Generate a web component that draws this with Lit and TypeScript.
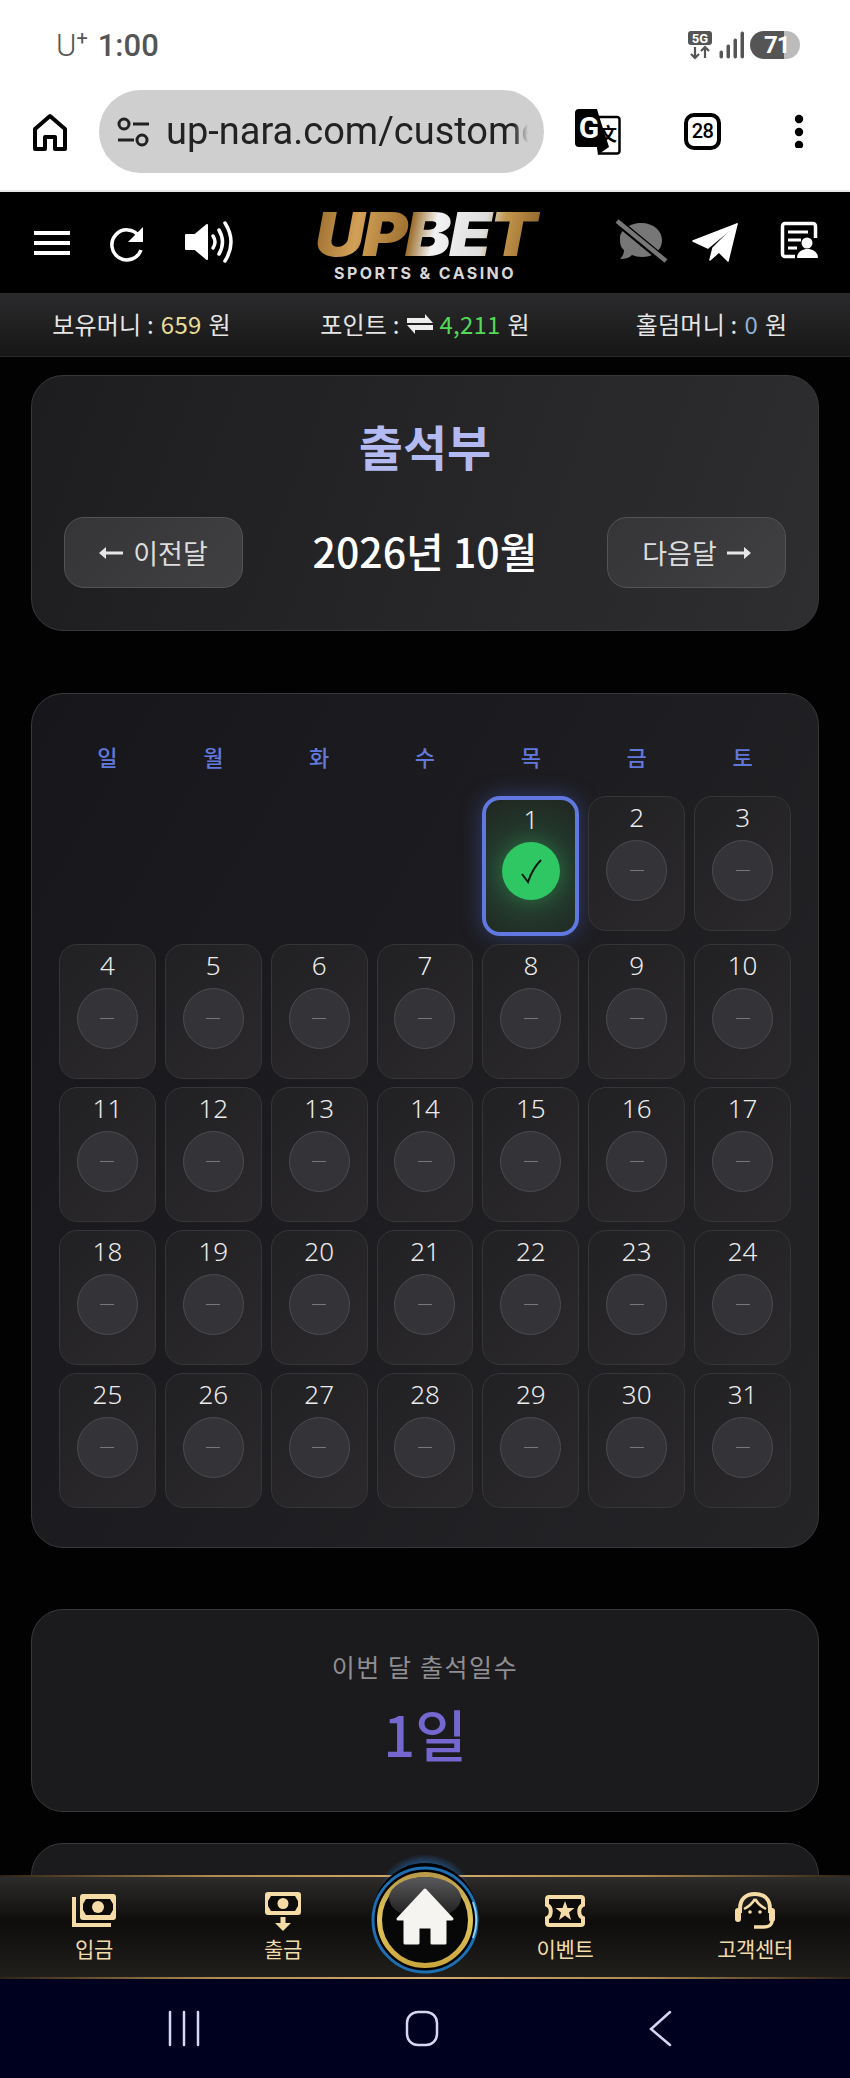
import { LitElement, html, css, svg } from "lit";
import { customElement } from "lit/decorators.js";

@customElement("app-root")
export class AppRoot extends LitElement {
  static styles = css`
    :host { display: block; width: 850px; height: 2078px; font-family: "Noto Sans CJK KR", "Noto Sans", sans-serif; background: #000; overflow: hidden; }
    * { box-sizing: border-box; }
    .page { height: 2078px; display: flex; flex-direction: column; }
    svg { display: block; }

    .status { height: 85px; background: #fff; display: flex; align-items: center; justify-content: space-between; padding: 5px 50px 0 56px; color: #555; flex: none; }
    .clock { display: flex; align-items: baseline; gap: 10px; font-family: Roboto, sans-serif; font-size: 31px; line-height: 1; }
    .uplus { font-weight: 300; }
    .uplus sup { font-size: 20px; line-height: 0; vertical-align: 11px; font-weight: 400; }
    .time { font-weight: 500; }
    .sysicons { display: flex; align-items: center; gap: 6px; }
    .batt { width: 50px; height: 28px; border-radius: 14px; background: linear-gradient(90deg, #555 0 68%, #bbb 68%); color: #fff; font: 700 24px/28px Roboto, sans-serif; text-align: left; padding-left: 14px; letter-spacing: -1px; }

    .toolbar { height: 107px; background: #fff; border-bottom: 2px solid #e9e9e9; display: flex; align-items: flex-start; padding-top: 5px; flex: none; }
    .tb-home { margin: 23px 0 0 33px; }
    .pill { margin: 0 0 0 32px; width: 445px; height: 83px; border-radius: 42px; background: #cfcfcf; display: flex; align-items: center; padding: 0 16px 0 17px; gap: 16px; }
    .pill svg { flex: none; }
    .url { font-family: Roboto, sans-serif; font-size: 38px; color: #222; white-space: nowrap; overflow: hidden; width: 362px; line-height: 83px; -webkit-mask-image: linear-gradient(90deg, #000 96%, transparent); mask-image: linear-gradient(90deg, #000 96%, transparent); }
    .tb-tr { margin: 19px 0 0 31px; }
    .tb-tab { margin: 23px 0 0 63px; width: 37px; height: 37px; border: 4px solid #000; border-radius: 10px; font: 500 20px/29px Roboto, sans-serif; color: #000; text-align: center; letter-spacing: -0.5px; }
    .tb-dots { margin: 24px 0 0 73px; }

    .header { height: 101px; background: #000; flex: none; position: relative; }
    .hicons { position: absolute; left: 0; top: 0; }
    .logo { position: absolute; left: 300px; top: 15px; width: 250px; display: flex; flex-direction: column; align-items: center; }
    .logo-main { font: italic 900 60px/54px Inter, "Liberation Sans", sans-serif; letter-spacing: -2px; transform: scaleX(1.15); background: linear-gradient(100deg, #8f6226 0%, #d2a057 22%, #9c6f2e 44%, #f2f2f2 54%, #dedede 74%, #c3954c 82%, #8a5f24 100%); -webkit-background-clip: text; background-clip: text; color: transparent; white-space: nowrap; padding: 0 6px; }
    .logo-sub { font: 700 16px/20px Inter, "Liberation Sans", sans-serif; letter-spacing: 2.4px; color: #d8d8d8; margin-top: 2px; white-space: nowrap; }

    .balance { height: 64px; flex: none; background: linear-gradient(180deg, #2b2b2d, #161616); border-bottom: 1px solid #2a2a2a; display: grid; grid-template-columns: 283px 284px 283px; align-items: center; color: #e6e6e6; font-size: 24px; letter-spacing: 0.2px; text-align: center; white-space: nowrap; padding-bottom: 2px; }
    .balance .a { color: #e8dc96; } .balance .b { color: #52d957; } .balance .c { color: #8fb0d8; }
    .bal { display: flex; align-items: center; justify-content: center; gap: 7px; }
    .bal.r { padding-left: 6px; }

    .main { flex: 1; min-height: 0; overflow: hidden; padding: 18px 31px 0; display: flex; flex-direction: column; background: #020203; }
    .card { flex: none; border-radius: 32px; border: 1px solid #38373a; }
    .top { height: 256px; background: linear-gradient(110deg, #1d1d20, #2e2d30); padding: 37px 32px 0; display: flex; flex-direction: column; align-items: center; }
    .title { font-size: 48px; line-height: 64px; font-weight: 700; color: #b3baf2; }
    .monthrow { align-self: stretch; margin-top: 40px; display: flex; align-items: center; justify-content: space-between; }
    .mbtn { width: 179px; height: 71px; border-radius: 20px; border: 1px solid #535256; background: linear-gradient(135deg, #353437, #403f42); color: #dcdcdc; font-size: 27px; display: flex; align-items: center; justify-content: center; gap: 10px; }
    .month { font-size: 41px; font-weight: 500; color: #fff; line-height: 60px; padding-bottom: 5px; }

    .cal { margin-top: 62px; height: 855px; background: linear-gradient(120deg, #17161a, #242326); padding: 47px 27px 0; }
    .dow { display: grid; grid-template-columns: repeat(7, 1fr); gap: 9px; color: #6279dc; font-size: 22px; font-weight: 500; text-align: center; line-height: 30px; }
    .grid { margin-top: 25px; display: grid; grid-template-columns: repeat(7, 1fr); gap: 8px 9px; align-items: start; }
    .cell { height: 135px; border-radius: 18px; border: 1px solid #363538; background: linear-gradient(135deg, #212023, #2b292c); display: flex; flex-direction: column; align-items: center; color: #ececec; font-family: "Noto Sans", sans-serif; font-weight: 300; font-size: 26px; line-height: 30px; padding-top: 5px; }
    .ghost { visibility: hidden; }
    .dot { margin-top: 8px; width: 61px; height: 61px; border-radius: 50%; border: 1px solid #4c4b4f; background: #343337; display: flex; align-items: center; justify-content: center; }
    .dash { width: 14px; height: 1px; background: #77767a; }
    .cell.on { height: 140px; border: 4px solid #6078e0; background: radial-gradient(circle at 50% 55%, #2c5a3c 0%, #22342a 60%, #20261f 100%); box-shadow: 0 0 22px rgba(80,110,230,.4); padding-top: 4px; }
    .cell.on .dot { margin-top: 8px; width: 58px; height: 58px; border: none; background: #2fc764; box-shadow: 0 0 16px rgba(47,199,100,.25); }

    .stat { margin-top: 61px; height: 203px; background: #1b1a1d; padding-top: 36px; display: flex; flex-direction: column; align-items: center; }
    .stat .lbl { font-size: 25px; line-height: 40px; color: #8f8e92; letter-spacing: 1.6px; }
    .stat .val { font-size: 56px; font-weight: 500; line-height: 84px; margin-top: 5px; color: #7468d0; }
    .next { margin-top: 31px; height: 200px; background: #1b1a1d; }

    .nav { height: 104px; flex: none; position: relative; background: linear-gradient(180deg, #2d2c2b 0%, #0e0d0c 45%, #211f1c 100%); border-top: 2px solid; border-bottom: 2px solid; border-image: linear-gradient(90deg, #2d2316, #b08a50 25%, #d6ad6b 50%, #b08a50 75%, #2d2316) 1; }
    .items { position: relative; height: 100%; }
    .item { position: absolute; top: 0; bottom: 0; width: 140px; margin-left: -70px; display: flex; flex-direction: column; align-items: center; color: #f2dcaa; font-size: 21px; letter-spacing: -0.4px; }
    .item .tx { line-height: 30px; margin-top: 2px; white-space: nowrap; }
    .homebtn { position: absolute; left: 355px; top: -27px; }

    .sysnav { height: 99px; flex: none; background: #00001f; position: relative; }
    .sysnav svg { position: absolute; left: 0; top: 0; }
  `;

  private icons() {
    return html`
      <svg class="hicons" width="850" height="101" viewBox="0 0 850 101">
        <g fill="#fff">
          <rect x="34" y="39" width="36" height="4"/><rect x="34" y="49" width="36" height="4"/><rect x="34" y="59" width="36" height="4"/>
        </g>
        <path d="M139 44 A15 15 0 1 0 141 58" fill="none" stroke="#fff" stroke-width="3.500"/>
        <path d="M143 35 L143 50 L128 50 Z" fill="#fff"/>
        <path d="M186 43 L195 43 L207 33 L207 67 L195 57 L186 57 Z" fill="#fff" stroke="#fff" stroke-linejoin="round" stroke-width="2"/>
        <g fill="none" stroke="#fff" stroke-width="3.500" stroke-linecap="round">
          <path d="M213 44 Q217 50 213 56"/><path d="M219 38 Q226 50 219 62"/><path d="M225 31 Q237 50 225 69"/>
        </g>
        <path d="M641 31 C654 31 662 39 662 48 C662 58 654 65 642 65 C638 65 635 64 632 63 C629 66 625 67 620 67 C623 64 624 61 624 58 C620 55 620 50 620 46 C620 38 630 31 641 31 Z" fill="#777"/>
        <path d="M619 31 L665 69" stroke="#000" stroke-width="8"/>
        <path d="M617 29 L666 69" stroke="#777" stroke-width="4.500"/>
        <path d="M737 32 L693 49 L708 56 Z" fill="#fff" stroke="#fff" stroke-width="1.500" stroke-linejoin="round"/>
        <path d="M737 32 L713 56 L710 68 L719 60 L728 69 Z" fill="#fff" stroke="#fff" stroke-width="1.500" stroke-linejoin="round"/>
        <path d="M795 64.500 H785 A2.500 2.500 0 0 1 782.500 62 V34 A2.500 2.500 0 0 1 785 31.500 H813 A2.500 2.500 0 0 1 815.500 34 V46" fill="none" stroke="#fff" stroke-width="3.500"/>
        <path d="M788 40 H808 M788 48 H801 M788 56 H797" stroke="#fff" stroke-width="3"/>
        <circle cx="807" cy="51" r="5.500" fill="#fff"/>
        <path d="M797 66 C797 54 818 54 818 66 Z" fill="#fff"/>
      </svg>`;
  }

  private navIcon(n: number) {
    const c = "#f5dca6";
    const dark = "#0d0c0b";
    if (n === 0)
      return svg`<svg width="46" height="54" viewBox="0 0 46 54"><path d="M3 20 V48 H40" fill="none" stroke="${c}" stroke-width="4"/><rect x="9" y="17" width="36" height="26" rx="3" fill="${c}"/><path d="M15 22 H39 L42 27 V33 L39 38 H15 L12 33 V27 Z" fill="${dark}"/><circle cx="27" cy="30" r="6" fill="${c}"/></svg>`;
    if (n === 1)
      return svg`<svg width="36" height="54" viewBox="0 0 36 54"><rect x="0" y="15" width="36" height="23" rx="3" fill="${c}"/><path d="M6 19 H30 L33 24 V29 L30 34 H6 L3 29 V24 Z" fill="${dark}"/><circle cx="18" cy="26.500" r="5.500" fill="${c}"/><path d="M15.500 40 H20.500 V46 H26 L18 54 L10 46 H15.500 Z" fill="${c}"/></svg>`;
    if (n === 2)
      return svg`<svg width="42" height="54" viewBox="0 0 42 54"><path d="M5 20 H37 A2 2 0 0 1 39 22 V28 C34 30 34 39 39 41 V46 A2 2 0 0 1 37 48 H5 A2 2 0 0 1 3 46 V41 C8 39 8 30 3 28 V22 A2 2 0 0 1 5 20 Z" fill="${dark}" stroke="${c}" stroke-width="4"/><path d="M21 24 L23.500 31 L30.500 31 L25 35.500 L27 43 L21 38.500 L15 43 L17 35.500 L11.500 31 L18.500 31 Z" fill="${c}"/></svg>`;
    return svg`<svg width="42" height="54" viewBox="0 0 42 54"><path d="M6 36 V32 C6 22 12 17 21 17 C30 17 36 22 36 32 V36" fill="none" stroke="${c}" stroke-width="4"/><path d="M21 22 C18 27 14 30 10 32 V36 C10 42 15 46 21 46 C27 46 32 42 32 36 V32 C28 30 24 27 21 22 Z" fill="${dark}"/><path d="M21 22 C18 27 14 30 10 32 M21 22 C24 27 28 30 32 32" fill="none" stroke="${c}" stroke-width="2.500"/><rect x="1" y="31" width="6" height="14" rx="3" fill="${c}"/><rect x="35" y="31" width="6" height="14" rx="3" fill="${c}"/><path d="M38 44 C38 48 34 50 30 50 H20" fill="none" stroke="${c}" stroke-width="3.500"/><circle cx="16" cy="35" r="1.800" fill="${c}"/><circle cx="26" cy="35" r="1.800" fill="${c}"/></svg>`;
  }

  render() {
    const days = Array.from({ length: 31 }, (_, i) => i + 1);
    const arrow = (right: boolean) => html`<svg width="24" height="14" viewBox="0 0 24 14" style="${right ? "" : "transform:scaleX(-1)"}"><path d="M0 5.500 H17 V1 L24 7 L17 13 V8.500 H0 Z" fill="#e6e6e6"/></svg>`;
    return html`<div class="page">
      <div class="status">
        <div class="clock"><span class="uplus">U<sup>+</sup></span><span class="time">1:00</span></div>
        <div class="sysicons">
          <svg width="26" height="30" viewBox="0 0 26 30"><rect x="1" y="1" width="24" height="14" rx="3" fill="#555"/><text x="13" y="13" text-anchor="middle" font-family="Roboto" font-size="13" font-weight="700" fill="#fff">5G</text><path d="M8 17 V28 M4 24 L8 28 L12 24 M18 28 V17 M14 21 L18 17 L22 21" fill="none" stroke="#555" stroke-width="2.200"/></svg>
          <svg width="25" height="28" viewBox="0 0 25 28"><g fill="#555" stroke="#555"><rect x="1" y="20" width="2.500" height="7" rx="1"/><rect x="8" y="14" width="2.500" height="13" rx="1"/><rect x="15" y="8" width="2.500" height="19" rx="1"/><rect x="22" y="1" width="2.500" height="26" rx="1"/></g></svg>
          <div class="batt">71</div>
        </div>
      </div>
      <div class="toolbar">
        <svg class="tb-home" width="34" height="38" viewBox="0 0 34 38"><path d="M17 3 L32 16 V36 H22 V24 H12 V36 H2 V16 Z" fill="none" stroke="#000" stroke-width="4" stroke-linejoin="round"/></svg>
        <div class="pill">
          <svg width="34" height="36" viewBox="0 0 34 36"><circle cx="8" cy="10" r="5" fill="none" stroke="#222" stroke-width="3"/><path d="M17 10 H33" stroke="#222" stroke-width="3"/><circle cx="26" cy="26" r="5" fill="none" stroke="#222" stroke-width="3"/><path d="M2 26 H18" stroke="#222" stroke-width="3"/></svg>
          <div class="url">up-nara.com/customer</div>
        </div>
        <svg class="tb-tr" width="46" height="46" viewBox="0 0 46 46"><path d="M20 8 H42 A2.500 2.500 0 0 1 44.500 10.500 V42 A2.500 2.500 0 0 1 42 44.500 H24 Z" fill="#fff" stroke="#000" stroke-width="2.500"/><path d="M4 0 H22 L24 7 L34 38 H4 A4 4 0 0 1 0 34 V4 A4 4 0 0 1 4 0 Z" fill="#000"/><path d="M22 38 L34 38 L24 45 Z" fill="#000"/><text x="14" y="29" text-anchor="middle" font-family="Roboto" font-weight="700" font-size="30" fill="#fff">G</text><text x="33" y="32" text-anchor="middle" font-family="'Noto Sans CJK SC'" font-size="18" font-weight="700" fill="#000">文</text></svg>
        <div class="tb-tab">28</div>
        <svg class="tb-dots" width="10" height="34" viewBox="0 0 10 34"><circle cx="5" cy="5" r="4.200"/><circle cx="5" cy="18" r="4.200"/><circle cx="5" cy="31" r="4.200"/></svg>
      </div>
      <div class="header">
        ${this.icons()}
        <div class="logo">
          <div class="logo-main">UPBET</div>
          <div class="logo-sub">SPORTS &amp; CASINO</div>
        </div>
      </div>
      <div class="balance">
        <div class="bal"><span>보유머니 :</span><span class="a">659</span><span>원</span></div>
        <div class="bal"><span>포인트 :</span><svg width="26" height="20" viewBox="0 0 26 20"><path d="M0 4 H18 V0 L26 9 H0 Z M26 11 H0 L8 20 V16 H26 Z" fill="#eee"/></svg><span class="b">4,211</span><span>원</span></div>
        <div class="bal r"><span>홀덤머니 :</span><span class="c">0</span><span>원</span></div>
      </div>
      <div class="main">
        <div class="card top">
          <div class="title">출석부</div>
          <div class="monthrow">
            <div class="mbtn">${arrow(false)}<span>이전달</span></div>
            <div class="month">2026년 10월</div>
            <div class="mbtn"><span>다음달</span>${arrow(true)}</div>
          </div>
        </div>
        <div class="card cal">
          <div class="dow">${["일","월","화","수","목","금","토"].map(d => html`<div>${d}</div>`)}</div>
          <div class="grid">
            ${[0,1,2,3].map(() => html`<div class="cell ghost"></div>`)}
            ${days.map(d => d === 1
              ? html`<div class="cell on">${d}<div class="dot"><svg width="24" height="26" viewBox="0 0 24 26"><path d="M3 16 L9 24 C12 15 16 8 22 2" fill="none" stroke="#0b1a10" stroke-width="2"/></svg></div></div>`
              : html`<div class="cell">${d}<div class="dot"><span class="dash"></span></div></div>`)}
          </div>
        </div>
        <div class="card stat">
          <div class="lbl">이번 달 출석일수</div>
          <div class="val">1일</div>
        </div>
        <div class="card next"></div>
      </div>
      <div class="nav">
        <div class="items">
          ${[["입금",94],["출금",283],["이벤트",565],["고객센터",755]].map(([t,x],i) => html`<div class="item" style="left:${x}px">${this.navIcon(i)}<div class="tx">${t}</div></div>`)}
        </div>
        <svg class="homebtn" width="140" height="140" viewBox="0 0 140 140">
          <defs>
            <radialGradient id="hglow" cx="50%" cy="50%" r="50%"><stop offset="70%" stop-color="#2a78c8" stop-opacity=".55"/><stop offset="100%" stop-color="#2a78c8" stop-opacity="0"/></radialGradient>
            <linearGradient id="gold" x1="0" y1="0" x2="0" y2="1"><stop offset="0" stop-color="#b89a4a"/><stop offset=".5" stop-color="#e2c65a"/><stop offset="1" stop-color="#c9a63e"/></linearGradient>
            <linearGradient id="hl" x1="0" y1="0" x2="0" y2="1"><stop offset="0" stop-color="#5a5a5c"/><stop offset="1" stop-color="#1a1a1a"/></linearGradient>
          </defs>
          <ellipse cx="70" cy="38" rx="44" ry="34" fill="url(#hglow)"/>
          <ellipse cx="70" cy="68" rx="53" ry="55" fill="#000"/>
          <circle cx="70" cy="70" r="52" fill="none" stroke="#1c6fb2" stroke-width="3"/>
          <path d="M118 52 A52 52 0 0 1 118 88" fill="none" stroke="#8fd0f5" stroke-width="2"/>
          <circle cx="70" cy="70" r="45.500" fill="#070707" stroke="url(#gold)" stroke-width="5"/>
          <ellipse cx="70" cy="48" rx="36" ry="21" fill="url(#hl)"/>
          <path d="M70 40 L97 69 L90 69 L90 93 L77 93 L77 77 L63 77 L63 93 L50 93 L50 69 L43 69 Z" fill="#f6f4f0" stroke="#f6f4f0" stroke-width="3" stroke-linejoin="round"/>
        </svg>
      </div>
      <div class="sysnav">
        <svg width="850" height="99" viewBox="0 0 850 99">
          <g stroke="#d5d8f0" stroke-width="2.500" fill="none" stroke-linecap="round">
            <path d="M170 33 V66 M184 33 V66 M198 33 V66"/>
            <rect x="407" y="33" width="30" height="33" rx="11"/>
            <path d="M670 33 L651 50 L670 66"/>
          </g>
        </svg>
      </div>
    </div>`;
  }
}
